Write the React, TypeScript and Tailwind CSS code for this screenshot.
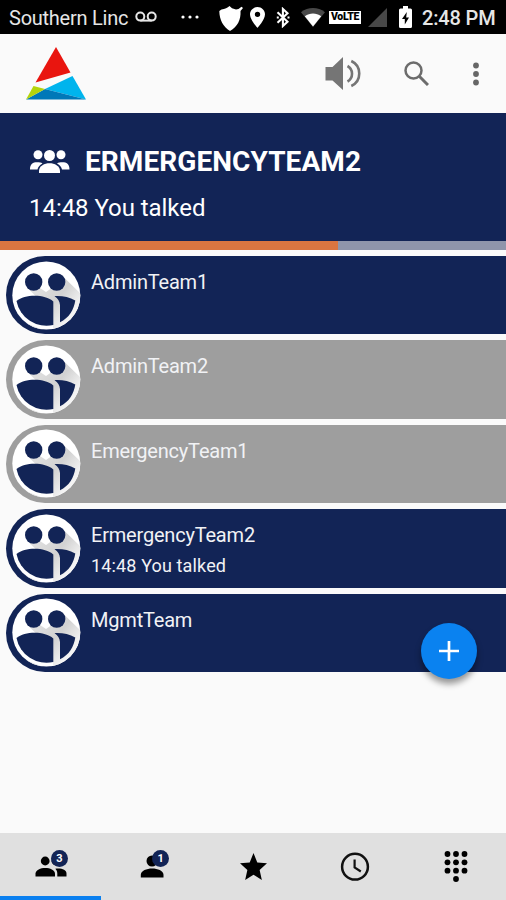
import React from "react";

const FONT = "font-['Roboto','Noto_Sans',sans-serif]";

function StatusBar() {
  return (
    <div className="flex h-[34px] shrink-0 items-center bg-black text-white">
      <span className="ml-[9px] w-[126px] whitespace-nowrap pt-[2px] text-[20px] leading-[34px] tracking-[-0.25px] text-[#e6e6e6]">Southern Linc</span>
      <svg className="h-[12px] w-[22px]" viewBox="0 0 22 12" fill="none" stroke="#e6e6e6" strokeWidth="2">
        <circle cx="5.3" cy="5.6" r="4" />
        <circle cx="16.7" cy="5.6" r="4" />
        <path d="M5.3 9.6H16.7" />
      </svg>
      <svg className="ml-[24px] h-[4px] w-[18px]" viewBox="0 0 18 4" fill="#fff">
        <circle cx="2" cy="2" r="1.6" />
        <circle cx="9" cy="2" r="1.6" />
        <circle cx="16" cy="2" r="1.6" />
      </svg>
      <svg className="ml-[20px] mt-[2px] h-[25px] w-[24px]" viewBox="0 0 24 25" fill="#fff">
        <path d="M10.500 0 13 2.200 17 3.400 19.500 3 22.500 .8 24 2 21.500 5C22 14 18.500 20.500 11 25 4 20.500 .5 14 .3 5L2.500 3.400C6 3 8.500 2 10.500 0Z" />
      </svg>
      <svg className="ml-[7px] h-[21px] w-[15px]" viewBox="5 2 14 20" preserveAspectRatio="none" fill="#fff">
        <path d="M12 2C8.130 2 5 5.130 5 9c0 5.250 7 13 7 13s7-7.750 7-13c0-3.870-3.130-7-7-7zm0 9.500a2.500 2.500 0 1 1 0-5 2.500 2.500 0 0 1 0 5z" />
      </svg>
      <svg className="ml-[11px] h-[21px] w-[14px]" viewBox="0 0 14 21" fill="none" stroke="#fff" strokeWidth="2.1">
        <path d="M1.500 5.300 11.500 14.700 6.900 19V2L11.500 6.300 1.500 15.700" />
        <path d="M.8 10.500h2M11.500 10.500h2" />
      </svg>
      <svg className="ml-[11px] mt-[1px] h-[19px] w-[24px]" viewBox="0 0 24 19">
        <path d="M0 4.200C7-1.400 17-1.400 24 4.200L12 19Z" fill="#484848" />
        <path d="M3.800 8.200C9 4.600 15 4.600 20.200 8.200L12 18.500Z" fill="#fff" />
      </svg>
      <span className="ml-[4px] flex h-[13px] w-[32px] items-center justify-center bg-white text-[10.5px] font-black leading-none tracking-[-0.3px] text-black">VoLTE</span>
      <svg className="ml-[7px] mt-[1px] h-[19px] w-[19px]" viewBox="0 0 19 19" fill="#484848">
        <path d="M19 0V19H0Z" />
      </svg>
      <svg className="ml-[12px] h-[22px] w-[13px]" viewBox="0 0 13 22">
        <path d="M4 0h5v2.500h2.500Q13 2.500 13 4V20.500Q13 22 11.500 22H1.500Q0 22 0 20.500V4Q0 2.500 1.500 2.500H4Z" fill="#fff" />
        <path d="M7.800 6 3 13h2.800V18.500L10 11.500H7.200Z" fill="#000" />
      </svg>
      <span className="ml-[10px] whitespace-nowrap pt-[2px] text-[20px] font-medium leading-[34px] tracking-[-0.15px] text-[#e6e6e6]">2:48 PM</span>
    </div>
  );
}

function Toolbar() {
  return (
    <header className="flex h-[79px] shrink-0 items-center bg-[#fafafa]">
      <svg className="ml-[26px] h-[53px] w-[60px]" viewBox="0 0 60 53">
        <path d="M30 0 44.500 25.500 9.500 35.500Z" fill="#e9150f" />
        <path d="M46.500 29 60 52.500 19 42Z" fill="#00b4ed" />
        <path d="M19 42 60 52.500H0Z" fill="#0078b8" />
        <path d="M7.500 39 19 42 0 52.500Z" fill="#b5d40b" />
      </svg>
      <svg className="ml-[239px] h-[34px] w-[37px]" viewBox="0 0 37 34">
        <path d="M.5 10H7.500L18 0V33L7.500 23.500H.5Z" fill="#757575" />
        <path d="M22.500 9A8.900 8.900 0 0 1 22.500 24.500M26.300 4A13.800 13.800 0 0 1 26.300 29" fill="none" stroke="#757575" strokeWidth="2.600" />
      </svg>
      <svg className="ml-[42px] h-[25px] w-[25px]" viewBox="0 0 25 25" fill="none" stroke="#6c6c6c">
        <circle cx="9.500" cy="9.500" r="8" strokeWidth="2.500" />
        <path d="M15.500 15.500 24 24" strokeWidth="3" />
      </svg>
      <svg className="ml-[44px] h-[24px] w-[6px]" viewBox="0 0 6 24" fill="#666">
        <circle cx="3" cy="3.500" r="2.900" />
        <circle cx="3" cy="12" r="2.900" />
        <circle cx="3" cy="20.500" r="2.900" />
      </svg>
    </header>
  );
}

function ActiveTeam() {
  return (
    <section className="flex h-[137px] shrink-0 flex-col bg-[#122456] text-white">
      <div className="mt-[31px] flex h-[36px] items-center pl-[30px]">
        <svg className="h-[24px] w-[40px]" viewBox="0 0 40 24" fill="#fff">
          <circle cx="8" cy="4.800" r="4.500" />
          <circle cx="31" cy="4.800" r="4.500" />
          <circle cx="19.500" cy="5.500" r="5.500" />
          <path d="M0 19.500C0 14 3 12.300 7 12.300 9.500 12.300 11 12.600 12.500 13.400 9.500 15 8 17 7.500 19.500Z" />
          <path d="M39.500 19.500C39.500 14 36.500 12.300 32.500 12.300 30 12.300 28.500 12.600 27 13.400 30 15 31.500 17 32 19.500Z" />
          <path d="M9 23V21C9.500 10.800 29.500 10.800 30 21V23Z" />
        </svg>
        <h1 className="ml-[15px] whitespace-nowrap text-[28px] font-bold leading-[36px] tracking-[0.08px]">ERMERGENCYTEAM2</h1>
      </div>
      <p className="mt-[11px] h-[34px] whitespace-nowrap pl-[29px] text-[24px] leading-[34px] tracking-[-0.05px]">14:48 You talked</p>
      <div className="mt-auto h-[9px] bg-[#8f95ab]">
        <div className="h-full w-[338px] bg-[#da7541]" />
      </div>
    </section>
  );
}

function Avatar() {
  return (
    <svg className="h-[69px] w-[69px] shrink-0" viewBox="0 0 69 69">
      <defs>
        <linearGradient id="fold" gradientUnits="userSpaceOnUse" x1="30" y1="24" x2="62" y2="50">
          <stop offset="0" stopColor="#dedede" />
          <stop offset="0.500" stopColor="#d2d2d2" />
          <stop offset="1" stopColor="#f4f4f4" />
        </linearGradient>
        <clipPath id="disc"><circle cx="34.300" cy="34.500" r="34" /></clipPath>
      </defs>
      <circle cx="34.300" cy="34.500" r="34" fill="#fff" />
      <g clipPath="url(#disc)">
        <path d="M16 27.500 28 27 34 31 39 27.500 51 15.500 69 33V69H41V41C36 37 30 35.500 24 35.500Z" fill="url(#fold)" />
        <path d="M4 50A33 33 0 0 0 60 57L64 62 34 70 8 60Z" fill="#e4e4e4" />
      </g>
      <g fill="#122456">
        <circle cx="21.700" cy="21" r="8.700" />
        <circle cx="44.700" cy="21" r="8.700" />
        <path d="M4.500 40C13 33 33 33 41.300 40.500V64A30.500 30.500 0 0 1 4.500 40Z" />
        <path d="M42.500 35.200C50 34.700 57 36.200 63.300 39.500 62 48.500 57 57 48 61.300V44C47.500 40 46 37.500 42.500 35.200Z" />
      </g>
    </svg>
  );
}

const teams = [
  { name: "AdminTeam1", online: true },
  { name: "AdminTeam2", online: false },
  { name: "EmergencyTeam1", online: false },
  { name: "ErmergencyTeam2", online: true, note: "14:48 You talked" },
  { name: "MgmtTeam", online: true },
];

function TeamRow({ name, online, note }: { name: string; online: boolean; note?: string }) {
  return (
    <li className={`flex h-[78.4px] items-center rounded-l-full pl-[6px] text-[#f1f2f5] ${online ? "bg-[#122456]" : "bg-[#9e9e9e]"}`}>
      <Avatar />
      <div className="ml-[10px] h-full whitespace-nowrap">
        <p className="mt-[13px] text-[20px] leading-[26px] tracking-[-0.2px]">{name}</p>
        {note && <p className="mt-[6px] text-[18px] leading-[24px] tracking-[0.14px]">{note}</p>}
      </div>
    </li>
  );
}

function Badge({ children }: { children: string }) {
  return (
    <span className="absolute top-[17px] left-[51px] flex h-[17px] w-[17px] items-center justify-center rounded-full bg-[#122456] pt-px text-[11px] font-bold text-white">
      {children}
    </span>
  );
}

function BottomNav() {
  return (
    <nav className="grid h-[67px] shrink-0 grid-cols-5 bg-[#e0e0e0]">
      <div className="relative flex border-b-4 border-[#0a80f0]">
        <svg className="mt-[23px] ml-[35px] h-[21px] w-[32px]" viewBox="0 0 32 21">
          <circle cx="10.200" cy="5" r="4.400" />
          <circle cx="21" cy="5" r="4.400" />
          <path d="M.5 20.500V17.500C1 10 19.500 10 20 17.500V20.500Z" />
          <path d="M22.300 20.500V17.500C22.300 15.500 21.500 14 20.300 12.800 26 12 31.500 13.500 31.500 17.500V20.500Z" />
        </svg>
        <Badge>3</Badge>
      </div>
      <div className="relative flex">
        <svg className="mt-[22px] ml-[39px] h-[23px] w-[24px]" viewBox="0 0 24 23">
          <circle cx="12" cy="6" r="5.500" />
          <path d="M.8 22.500V19.800C1.300 11.500 23 11.500 23.500 19.800V22.500Z" />
        </svg>
        <Badge>1</Badge>
      </div>
      <div className="flex justify-center pl-px">
        <svg className="mt-[20px] h-[27px] w-[27px]" viewBox="2 2 20 19" preserveAspectRatio="none">
          <path d="M12 17.270 18.180 21l-1.640-7.030L22 9.240l-7.190-.610L12 2 9.190 8.630 2 9.240l5.460 4.730L5.820 21z" />
        </svg>
      </div>
      <div className="flex justify-center pl-[2px]">
        <svg className="mt-[19px] h-[30px] w-[30px]" viewBox="0 0 30 30" fill="none" stroke="#111" strokeWidth="2.500">
          <circle cx="15" cy="14.700" r="12.900" />
          <path d="M14.600 7.500V15.500L20.800 19.500" strokeWidth="2.200" />
        </svg>
      </div>
      <div className="flex justify-center pl-[2px]">
        <svg className="mt-[17px] h-[32px] w-[24px]" viewBox="0 0 24 32">
          {[4, 12.3, 20.7].map((y) => [3.5, 12, 20.5].map((x) => <circle key={`${x}-${y}`} cx={x} cy={y} r="2.900" />))}
          <circle cx="12" cy="29" r="2.900" />
        </svg>
      </div>
    </nav>
  );
}

export default function App() {
  return (
    <div className={`relative flex h-[900px] w-[506px] flex-col overflow-hidden bg-[#fafafa] ${FONT}`}>
      <StatusBar />
      <Toolbar />
      <ActiveTeam />
      <ul className="flex flex-1 flex-col gap-[6px] pt-[6px] pl-[6px]">
        {teams.map((t) => <TeamRow key={t.name} {...t} />)}
      </ul>
      <button className="absolute top-[623px] left-[421px] flex h-[56px] w-[56px] items-center justify-center rounded-full bg-[#0a82f0] shadow-[0_5px_6px_rgba(0,0,0,0.4)]">
        <svg className="h-[20px] w-[20px]" viewBox="0 0 20 20" stroke="#fff" strokeWidth="2.700">
          <path d="M0 10H20M10 0V20" />
        </svg>
      </button>
      <BottomNav />
    </div>
  );
}
